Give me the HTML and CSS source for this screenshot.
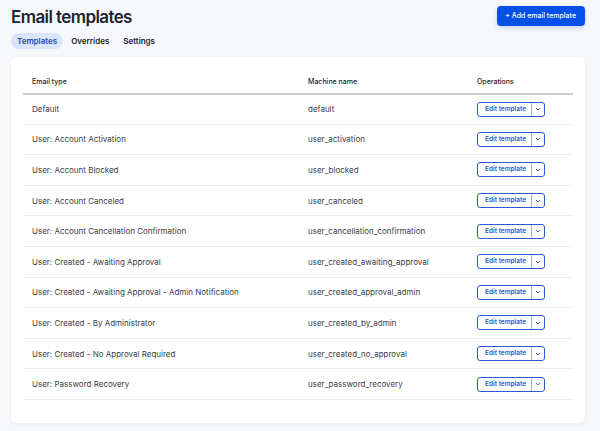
FILE: index.html
```html
<!DOCTYPE html>
<html lang="en">
<head>
<meta charset="utf-8">
<title>Email templates</title>
<link rel="stylesheet" href="styles.css">
</head>
<body>
<div class="page">
  <header class="top">
    <div class="titles">
      <h1 class="title">Email templates</h1>
      <nav class="tabs">
        <a class="tab active">Templates</a>
        <a class="tab">Overrides</a>
        <a class="tab">Settings</a>
      </nav>
    </div>
    <a class="add-btn">+ Add email template</a>
  </header>
  <section class="card">
    <table class="tbl">
      <thead>
        <tr><th class="c1">Email type</th><th class="c2">Machine name</th><th class="c3">Operations</th></tr>
      </thead>
      <tbody>
        <tr><td>Default</td><td>default</td><td><span class="drop"><span class="drop-main">Edit template</span><span class="drop-arrow"><svg width="6" height="4" viewBox="0 0 6 4"><path d="M1 1l2 2 2-2" fill="none" stroke="currentColor" stroke-width="0.9"/></svg></span></span></td></tr>
        <tr><td>User: Account Activation</td><td>user_activation</td><td><span class="drop"><span class="drop-main">Edit template</span><span class="drop-arrow"><svg width="6" height="4" viewBox="0 0 6 4"><path d="M1 1l2 2 2-2" fill="none" stroke="currentColor" stroke-width="0.9"/></svg></span></span></td></tr>
        <tr><td>User: Account Blocked</td><td>user_blocked</td><td><span class="drop"><span class="drop-main">Edit template</span><span class="drop-arrow"><svg width="6" height="4" viewBox="0 0 6 4"><path d="M1 1l2 2 2-2" fill="none" stroke="currentColor" stroke-width="0.9"/></svg></span></span></td></tr>
        <tr><td>User: Account Canceled</td><td>user_canceled</td><td><span class="drop"><span class="drop-main">Edit template</span><span class="drop-arrow"><svg width="6" height="4" viewBox="0 0 6 4"><path d="M1 1l2 2 2-2" fill="none" stroke="currentColor" stroke-width="0.9"/></svg></span></span></td></tr>
        <tr><td>User: Account Cancellation Confirmation</td><td>user_cancellation_confirmation</td><td><span class="drop"><span class="drop-main">Edit template</span><span class="drop-arrow"><svg width="6" height="4" viewBox="0 0 6 4"><path d="M1 1l2 2 2-2" fill="none" stroke="currentColor" stroke-width="0.9"/></svg></span></span></td></tr>
        <tr><td>User: Created - Awaiting Approval</td><td>user_created_awaiting_approval</td><td><span class="drop"><span class="drop-main">Edit template</span><span class="drop-arrow"><svg width="6" height="4" viewBox="0 0 6 4"><path d="M1 1l2 2 2-2" fill="none" stroke="currentColor" stroke-width="0.9"/></svg></span></span></td></tr>
        <tr><td>User: Created - Awaiting Approval - Admin Notification</td><td>user_created_approval_admin</td><td><span class="drop"><span class="drop-main">Edit template</span><span class="drop-arrow"><svg width="6" height="4" viewBox="0 0 6 4"><path d="M1 1l2 2 2-2" fill="none" stroke="currentColor" stroke-width="0.9"/></svg></span></span></td></tr>
        <tr><td>User: Created - By Administrator</td><td>user_created_by_admin</td><td><span class="drop"><span class="drop-main">Edit template</span><span class="drop-arrow"><svg width="6" height="4" viewBox="0 0 6 4"><path d="M1 1l2 2 2-2" fill="none" stroke="currentColor" stroke-width="0.9"/></svg></span></span></td></tr>
        <tr><td>User: Created - No Approval Required</td><td>user_created_no_approval</td><td><span class="drop"><span class="drop-main">Edit template</span><span class="drop-arrow"><svg width="6" height="4" viewBox="0 0 6 4"><path d="M1 1l2 2 2-2" fill="none" stroke="currentColor" stroke-width="0.9"/></svg></span></span></td></tr>
        <tr><td>User: Password Recovery</td><td>user_password_recovery</td><td><span class="drop"><span class="drop-main">Edit template</span><span class="drop-arrow"><svg width="6" height="4" viewBox="0 0 6 4"><path d="M1 1l2 2 2-2" fill="none" stroke="currentColor" stroke-width="0.9"/></svg></span></span></td></tr>
      </tbody>
    </table>
  </section>
</div>
</body>
</html>
```
FILE: styles.css
```css
* { box-sizing: border-box; }
html, body { margin: 0; padding: 0; }
body {
  background: #f7f8fc;
  font-family: Inter, "Noto Sans", sans-serif;
  color: #222330;
  width: 600px;
  height: 431px;
  overflow: hidden;
}
.page { padding: 6px 15px 0 11px; }
.top { display: flex; justify-content: space-between; align-items: flex-start; }
.title {
  margin: 0;
  font-size: 17px;
  font-weight: 600;
  letter-spacing: -0.035em;
  line-height: 22px;
  color: #222330;
}
.tabs { display: flex; gap: 2px; margin-top: 5px; }
.tab {
  font-size: 8px;
  font-weight: 600;
  color: #222330;
  padding: 0 6px;
  height: 16px;
  line-height: 16px;
  border-radius: 8px;
  white-space: nowrap;
}
.tab.active { background: #dae5fb; color: #1f4da3; }
.add-btn {
  display: block;
  background: #0550e6;
  color: #fff;
  font-size: 7px;
  font-weight: 500;
  height: 20px;
  line-height: 20px;
  padding: 0 9px 0 8px;
  border-radius: 4px;
  white-space: nowrap;
  box-shadow: 0 2px 5px rgba(5, 80, 230, 0.2);
}
.card {
  margin-top: 8px;
  background: #fff;
  border-radius: 6px;
  box-shadow: 0 1px 4px rgba(0, 0, 0, 0.06);
  padding: 13px 11px 24px 12px;
  height: 366px;
}
.tbl { width: 550px; border-collapse: collapse; table-layout: fixed; }
.tbl th, .tbl td { text-align: left; padding: 0 0 0 9px; white-space: nowrap; }
.c1 { width: 276px; }
.c2 { width: 169px; }
.c3 { width: 105px; }
.tbl th {
  font-size: 7px;
  font-weight: 500;
  color: #222330;
  height: 23.5px;
  border-bottom: 2px solid #cdcdd2;
}
.tbl td {
  font-size: 8px;
  color: #3b3c45;
  height: 30.6px;
  border-bottom: 1px solid #ececf0;
}
.drop {
  display: inline-flex;
  align-items: stretch;
  height: 15px;
  border: 1px solid #2c5bcf;
  border-radius: 3px;
  color: #2c5bcf;
  vertical-align: middle;
}
.drop-main {
  font-size: 6.5px;
  font-weight: 600;
  line-height: 13px;
  padding: 0 0 0 7px;
  width: 54px;
  white-space: nowrap;
  border-right: 1px solid #9fb4e6;
}
.drop-arrow { display: flex; align-items: center; justify-content: center; width: 12px; }
```
